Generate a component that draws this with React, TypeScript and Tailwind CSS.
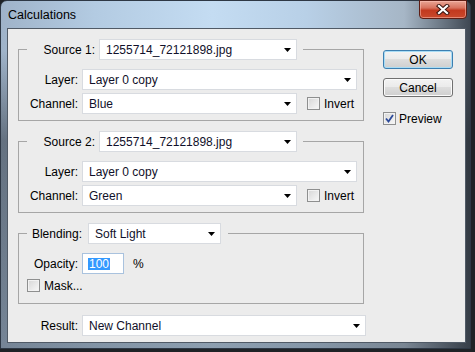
import type { ReactNode } from 'react';

const Arrow = () => (
  <svg width="7" height="4" viewBox="0 0 7 4" className="shrink-0">
    <path d="M0 0H7L3.5 4Z" fill="#000" />
  </svg>
);

const Drop = ({ value, width }: { value: string; width: string }) => (
  <div
    className={`flex h-[21px] ${width} shrink-0 items-center justify-between border border-[#d8dbe0] bg-white pl-[6px] pr-[5px] text-[#10102a]`}
  >
    <span>{value}</span>
    <Arrow />
  </div>
);

const Box = ({ checked }: { checked?: boolean }) => (
  <span className="flex h-[13px] w-[13px] shrink-0 items-center justify-center border border-[#8e8f8f] bg-[linear-gradient(135deg,#d6d6d6,#f8f8f8)] shadow-[inset_0_0_0_1px_#f2f2f2]">
    {checked && (
      <svg width="9" height="9" viewBox="0 0 9 9">
        <path d="M1 4.5L3.5 7.5L8 1" fill="none" stroke="#2c4a9a" strokeWidth="1.8" />
      </svg>
    )}
  </span>
);

const Row = ({ label, children }: { label: string; children: ReactNode }) => (
  <div className="flex items-center gap-[4px]">
    <span className="w-[59px] text-right">{label}</span>
    {children}
  </div>
);

const SourceGroup = ({ n, channel }: { n: number; channel: string }) => (
  <fieldset className="w-[346px] border border-[#a6a6a6] p-0 pb-[6px]">
    <legend className="ml-[8px] flex items-center gap-[4px] pr-[6px]">
      <span className="w-[68px] text-right">Source {n}:</span>
      <Drop value="1255714_72121898.jpg" width="w-[198px]" />
    </legend>
    <div className="flex flex-col gap-[3px] pt-[9px]">
      <Row label="Layer:">
        <Drop value="Layer 0 copy" width="w-[275px]" />
      </Row>
      <Row label="Channel:">
        <Drop value={channel} width="w-[215px]" />
        <span className="ml-[6px] flex items-center gap-[4px]">
          <Box />
          <span>Invert</span>
        </span>
      </Row>
    </div>
  </fieldset>
);

const Button = ({ children, focused }: { children: ReactNode; focused?: boolean }) => (
  <div
    className={`flex h-[19px] w-[70px] items-center justify-center rounded-[3px] border bg-[linear-gradient(180deg,#f3f3f3_0%,#ebebeb_45%,#dddddd_50%,#cfcfcf_100%)] ${
      focused ? 'border-[#3c7fb1] shadow-[inset_0_0_0_1px_#a8dcf5]' : 'border-[#707070] shadow-[inset_0_0_0_1px_#fbfbfb]'
    }`}
  >
    {children}
  </div>
);

export default function App() {
  return (
    <div className="h-[352px] w-[475px] overflow-hidden bg-[#1f2226] font-['Liberation_Sans',Arial,sans-serif] text-[12px] leading-none text-black">
      <div className="flex h-[349px] w-[471px] flex-col rounded-t-[7px] border border-[#2e3845] bg-[linear-gradient(180deg,rgba(0,0,0,0)_0px,rgba(0,0,0,0)_50px,rgba(28,32,38,0.45)_140px,rgba(40,46,54,0.35)_100%),linear-gradient(90deg,#9fb3c9_0%,#b3cbe2_20%,#c4dcf2_45%,#b8d0e7_65%,#a6b6c6_86%,#3f4853_100%)]">
        <div className="flex h-[27px] items-start justify-between pl-[7px] pr-[3px]">
          <span className="mt-[8px] text-[12.5px] text-black">Calculations</span>
          <div className="-mt-px flex h-[19px] w-[48px] items-center justify-center rounded-b-[4px] border border-[#5e1d14] bg-[linear-gradient(180deg,#e9a595_0%,#d8735f_40%,#c2391f_55%,#c9492c_100%)] shadow-[inset_0_0_0_1px_rgba(255,200,190,0.5)]">
            <svg width="14" height="11" viewBox="0 0 14 11">
              <path d="M3 2L11 9M11 2L3 9" stroke="#3b1510" strokeWidth="4.2" strokeLinecap="square" />
              <path d="M3 2L11 9M11 2L3 9" stroke="#fff" strokeWidth="2.2" strokeLinecap="square" />
            </svg>
          </div>
        </div>
        <div className="ml-[6px] flex h-[315px] w-[459px] border border-[#505a66] bg-[#ececec]">
          <div className="ml-[10px] flex w-[348px] flex-col pt-[10px]">
            <SourceGroup n={1} channel="Blue" />
            <div className="mt-[10px]">
              <SourceGroup n={2} channel="Green" />
            </div>
            <fieldset className="mt-[10px] w-[346px] border border-[#a6a6a6] p-0 pb-[11px]">
              <legend className="ml-[8px] flex items-center gap-[6px] pr-[7px]">
                <span className="w-[55px] text-right">Blending:</span>
                <Drop value="Soft Light" width="w-[133px]" />
              </legend>
              <div className="flex flex-col pt-[9px]">
                <Row label="Opacity:">
                  <div className="flex h-[21px] w-[42px] items-center border border-[#a9c2de] bg-white pl-[5px]">
                    <span className="inline-block h-[12px] bg-[#3399ff] px-[1px] leading-[12px] text-white">100</span>
                  </div>
                  <span className="ml-[5px]">%</span>
                </Row>
                <div className="ml-[8px] mt-[5px] flex items-center gap-[4px]">
                  <Box />
                  <span>Mask...</span>
                </div>
              </div>
            </fieldset>
            <div className="mt-[11px] flex items-center gap-[4px]">
              <span className="w-[60px] text-right">Result:</span>
              <Drop value="New Channel" width="w-[284px]" />
            </div>
          </div>
          <div className="ml-[17px] flex flex-col pt-[21px]">
            <Button focused>OK</Button>
            <div className="mt-[9px]">
              <Button>Cancel</Button>
            </div>
            <div className="mt-[15px] flex items-center gap-[3px]">
              <Box checked />
              <span>Preview</span>
            </div>
          </div>
        </div>
      </div>
    </div>
  );
}
